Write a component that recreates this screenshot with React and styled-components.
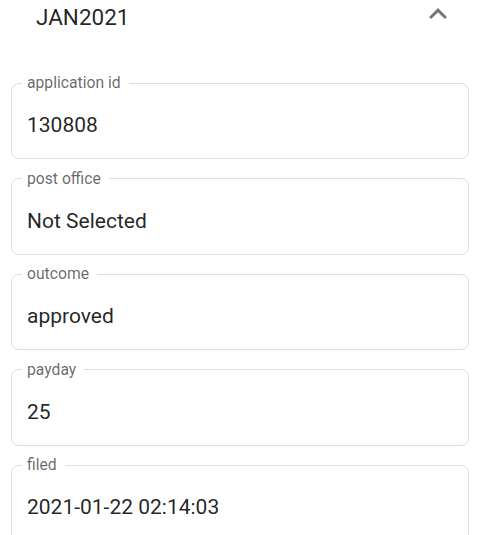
import React from "react";
import styled, { createGlobalStyle } from "styled-components";

const Global = createGlobalStyle`
  html, body { margin: 0; padding: 0; background: #fff; }
  body { font-family: Roboto, "Liberation Sans", Arial, sans-serif; }
  * { box-sizing: border-box; }
`;

const Page = styled.div`
  width: 480px;
  overflow: hidden;
`;

const Header = styled.div`
  display: flex;
  align-items: center;
  justify-content: space-between;
  height: 33px;
  padding: 0 33px 0 36px;
`;

const Title = styled.div`
  font-size: 22.5px;
  line-height: 26px;
  color: rgba(0, 0, 0, 0.87);
`;

const Chevron = styled.svg`
  width: 18px;
  height: 11px;
  margin-bottom: 7px;
  fill: rgba(0, 0, 0, 0.54);
`;

const Fields = styled.div`
  display: flex;
  flex-direction: column;
  gap: 9.5px;
  padding: 40px 11px 0;
`;

const Field = styled.fieldset`
  margin: 0;
  padding: 20px 15px 20px;
  border: 1px solid #dedede;
  border-radius: 8px;
  min-width: 0;
`;

const Legend = styled.legend`
  margin-left: -5px;
  padding: 0 8px 0 5px;
  font-size: 15.7px;
  line-height: 20px;
  color: rgba(0, 0, 0, 0.6);
`;

const Value = styled.div`
  font-size: 21px;
  line-height: 25px;
  color: rgba(0, 0, 0, 0.87);
`;

const rows = [
  ["application id", "130808"],
  ["post office", "Not Selected"],
  ["outcome", "approved"],
  ["payday", "25"],
  ["filed", "2021-01-22 02:14:03"],
];

export default function App() {
  return (
    <Page>
      <Global />
      <Header>
        <Title>JAN2021</Title>
        <Chevron viewBox="6 8 12 7.41" aria-hidden="true">
          <path d="M12 8l-6 6 1.41 1.41L12 10.83l4.59 4.58L18 14z" />
        </Chevron>
      </Header>
      <Fields>
        {rows.map(([label, value]) => (
          <Field key={label}>
            <Legend>{label}</Legend>
            <Value>{value}</Value>
          </Field>
        ))}
      </Fields>
    </Page>
  );
}
